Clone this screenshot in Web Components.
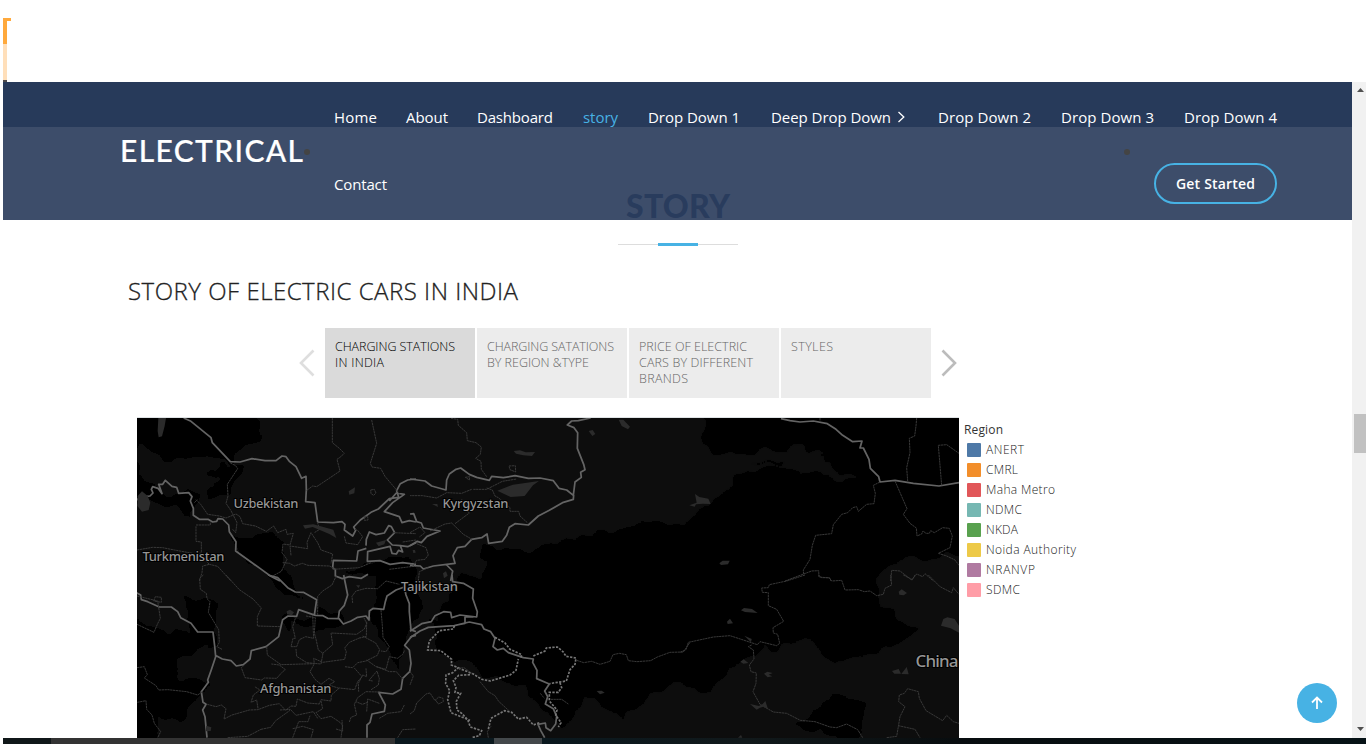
<!DOCTYPE html>
<html lang="en">
<head>
<meta charset="utf-8">
<title>Electrical</title>
<style>
html,body{margin:0;height:744px;overflow:hidden;background:#fff;font-family:"Open Sans","Noto Sans",sans-serif}
</style>
</head>
<body>
<electrical-app></electrical-app>
<script>
const define = (name, html, init) => customElements.define(name, class extends HTMLElement {
  constructor() {
    super();
    const t = document.createElement('template');
    t.innerHTML = html;
    this.attachShadow({mode: 'open'}).append(t.content.cloneNode(true));
  }
  connectedCallback() { if (init) init.call(this); }
});

/* A single line whose tracking is adjusted to fill the width in its w attribute. */
define('fit-text', `<style>:host{display:block;white-space:nowrap}span{display:inline-block}</style><span><slot></slot></span>`, function () {
  const w = +this.getAttribute('w'), s = this.shadowRoot.querySelector('span');
  s.style.letterSpacing = '0';
  const n = this.textContent.length;
  const c = document.createElement('canvas').getContext('2d'), g = getComputedStyle(this);
  c.font = g.fontWeight + ' ' + g.fontSize + ' ' + g.fontFamily;
  s.style.letterSpacing = ((w - c.measureText(this.textContent).width) / (n - 1)).toFixed(3) + 'px';
  this.style.width = w + 'px';
});

define('loader-strip', `<style>
:host{display:block;height:82px;box-sizing:border-box;padding:18px 0 0 3px}
.a{width:8px;height:3px;background:#ffa93c}.b{width:4px;height:23px;background:#ffa93c}
.c{width:4px;height:36px;background:#ffdfba}.d{width:4px;height:2px;background:#4d4a4c}
</style><div class="a"></div><div class="b"></div><div class="c"></div><div class="d"></div>`);

define('site-header', `<style>
:host{display:flex;align-items:center;height:138px;box-sizing:border-box;padding-left:117px;background:rgba(40,58,90,.9);color:#fff;font-size:15px}
.logo{font:500 30px Lato,sans-serif;line-height:40px;width:214px;padding-bottom:3px;-webkit-text-stroke:.2px #fff}
nav{width:943px;height:136px}
.row{display:flex;justify-content:space-between;align-items:center;height:67px}
.row.top{display:grid;grid-template-columns:72px 71px 106px 65px 123px 167px 123px 123px 93px}
.on{color:#47b2e4}
.deep{display:flex;align-items:center;gap:6px}
button{font:600 14px "Open Sans",sans-serif;color:#fff;background:none;border:2px solid #47b2e4;border-radius:21px;width:123px;height:41px;padding:0 0 0 20px;text-align:left}
i{position:absolute;width:6px;height:6px;border-radius:50%;background:#444;top:67px}
i.l{left:301px}i.r{left:1121px}
</style>
<div class="logo"><fit-text w="183">ELECTRICAL</fit-text></div>
<nav><div class="row top"><fit-text w="43">Home</fit-text><fit-text w="42">About</fit-text><fit-text w="76">Dashboard</fit-text><fit-text class="on" w="35">story</fit-text><fit-text w="92">Drop Down 1</fit-text><div class="deep"><fit-text w="120">Deep Drop Down</fit-text><svg width="9" height="12" viewBox="0 0 9 12"><path d="M1.500 1 6.800 6 1.500 11" fill="none" stroke="#fff" stroke-width="1.300"/></svg></div><fit-text w="93">Drop Down 2</fit-text><fit-text w="93">Drop Down 3</fit-text><fit-text w="93">Drop Down 4</fit-text></div>
<div class="row"><fit-text w="53">Contact</fit-text><button><fit-text w="79">Get Started</fit-text></button></div></nav>
<i class="l"></i><i class="r"></i>`);

define('section-title', `<style>
:host{display:flex;flex-direction:column;align-items:center;padding-top:59px;width:1350px;height:60px;color:#37517e}
fit-text{font:900 32px Lato,sans-serif;line-height:40px}
.rule{display:flex;align-items:center;margin-top:17px}
.rule b{width:40px;height:1px;background:#ddd}.rule b+b{height:3px;background:#47b2e4}.rule b+b+b{height:1px;background:#ddd}
</style><fit-text w="104">STORY</fit-text><div class="rule"><b></b><b></b><b></b></div>`);

define('story-tab', `<style>
:host{display:block;width:150px;height:70px;box-sizing:border-box;padding:11px 0 0 10px;background:#ececec;color:#666;font-size:12.5px;line-height:16px;font-weight:300}
:host([active]){background:#dadada;color:#000}
</style><slot></slot>`);

define('story-tabs', `<style>
:host{display:flex;align-items:center;gap:10px;padding-left:296px}
.t{display:flex;gap:2px}svg{display:block}
</style>
<svg width="16" height="30" viewBox="0 0 16 30"><path d="M14.500 2.500 2 15 14.500 27.500" fill="none" stroke="#dedede" stroke-width="2.600"/></svg>
<div class="t">
<story-tab active><fit-text w="120">CHARGING STATIONS</fit-text><fit-text w="49">IN INDIA</fit-text></story-tab>
<story-tab><fit-text w="127">CHARGING SATATIONS</fit-text><fit-text w="102">BY REGION &amp;TYPE</fit-text></story-tab>
<story-tab><fit-text w="108">PRICE OF ELECTRIC</fit-text><fit-text w="114">CARS BY DIFFERENT</fit-text><fit-text w="49">BRANDS</fit-text></story-tab>
<story-tab><fit-text w="42">STYLES</fit-text></story-tab></div>
<svg width="16" height="30" viewBox="0 0 16 30"><path d="M1.500 2.500 14 15 1.500 27.500" fill="none" stroke="#bcbcbc" stroke-width="2.600"/></svg>`);

define('region-map', `<style>
:host{display:block;width:822px;height:320px;border-top:1px solid #dfe3e5;background:#000;overflow:hidden}
svg{display:block}
.n{fill:none;stroke:#646464;stroke-width:5.2;stroke-linejoin:round}
.p{fill:none;stroke:#383838;stroke-width:3;stroke-dasharray:7 1.5}
.d{fill:none;stroke:#777;stroke-width:5;stroke-dasharray:7 4}
.w{fill:#2b2b2b}.g{fill:#0c0c0c}.h{fill:#131313}.k{fill:#030303}
text{font:500 13px "Noto Sans","Open Sans",sans-serif;fill:#969696;stroke:#000;stroke-width:2px;paint-order:stroke}
</style>
<svg width="822" height="320" viewBox="0 0 822 320">
<defs><filter id="soft" x="0" y="0" width="1" height="1"><feTurbulence type="fractalNoise" baseFrequency=".045" numOctaves="2" seed="4"/><feDisplacementMap in="SourceGraphic" scale="22" xChannelSelector="R" yChannelSelector="G" result="a"/><feGaussianBlur in="a" stdDeviation=".8"/></filter></defs>
<g filter="url(#soft)">
<path fill="none" d="M0 0H822V320H0Z"/>
<path class="g" d="M-20 -20H438L447 55 475 70 570 42 643 50 655 36 700 46 725 64 685 54 652 52 610 55 584 72 548 105 470 111 405 130 350 155 320 162 300 200 300 340H-20Z"/>
<path class="g" d="M438 -20H558L570 32H642L660 25 690 42 650 44 580 49 578 70 550 98 440 105Z"/>
<path class="g" d="M404 340 450 280 484 300 531 268 575 270 600 245 625 230 670 220 700 242 745 235 780 208 742 192 745 152 770 140H842V340Z"/>
<path fill="#0a0a0a" d="M285 222 325 235 350 258 385 270 420 300 440 340H280Z"/>
<path class="k" d="M-20 -20H110L122 20 90 42 28 40 28 60 55 67 60 100 35 84 -20 85ZM65 58 92 42 102 46 100 74 70 84ZM98 115 135 115 165 180 145 174 105 135ZM48 175 78 184 80 232 58 238 52 190ZM-20 195 50 213 73 237 66 272 45 303 24 300 12 340H-20ZM140 200 205 194 205 213 157 216ZM205 150 270 140 285 188 260 248 240 215 235 160ZM290 205 330 214 360 240 340 245 300 235Z"/>
<path class="h" d="M130 18 150 0H300L285 25 230 38 180 25ZM115 65 142 65 141 93 113 93ZM60 110 82 118 90 140 65 135ZM170 57 200 62 220 80 175 83ZM83 207 110 180 145 196 136 225 105 235 83 218ZM152 202 175 208 180 225 155 231ZM40 240 70 225 75 260 45 265ZM84 250 110 245 108 267 84 275ZM320 255 350 261 355 290 330 286 320 272Z" opacity=".65"/>
<path fill="#090909" d="M0 28 35 45 62 45 80 63 52 78 28 76 0 60ZM158 5 200 15 182 36 155 29ZM212 45 245 55 235 75 209 71ZM370 35 410 27 430 55 415 67 380 60Z"/>
<path fill="#060606" d="M455 115 520 103 548 112 530 118 475 125ZM340 130 410 130 425 142 395 160 365 178 352 160ZM365 190 400 200 450 210 478 222 440 228 390 210ZM655 310 700 275 730 283 720 320Z"/>
</g>
<g transform="translate(-1,-2) scale(.33333)">
<path class="n" d="M143 6 165 16 225 65 229 80 283 137 312 138 348 128 387 134 420 134 438 120 450 122 461 137 480 152 497 187 510 181 511 222 509 257 537 260 545 318 592 320 618 317 627 325 625 342 650 360 659 343 653 333 673 312 705 289 727 279 760 248 788 244 782 224 793 203 815 192 840 189M3 252 14 242 42 240 51 231 46 220 50 212 66 217 78 233 68 205 80 205 88 193 108 211 122 214 128 232 158 230 168 242 163 255 172 277 172 298 190 310 216 310 230 318 242 316 246 308 260 309 278 327 280 347 300 377 299 405 373 458 403 480 432 495M840 318 820 314 798 320 790 302 745 287 770 260 805 235 781 231 760 255M690 389 691 370 700 348 720 356 745 351 758 329 766 332 776 350 754 372 769 387 793 389 800 408 788 403 781 414 768 412 762 391 695 407 694 436 732 434 762 445 800 440 840 445M691 397 666 405 662 435 592 433 590 455 598 461 598 480 619 488 640 482 676 487 696 475M793 389 815 392 840 380"/>
<path class="p" d="M589 6V80L610 97 625 112 612 124 603 130 612 165 578 188 542 212 530 210 511 224M707 12 722 82 703 142 708 153 734 157 747 181 780 220 790 233M283 141 299 149 305 158 274 205 276 240 270 262 285 284 303 320 299 350 290 340M180 251 194 265 215 295 250 300 270 306 300 294 312 302 320 323 358 330 391 346 413 330 425 350 450 340 453 355 472 352 462 387 441 384 438 410 453 430 436 466 410 480M175 260 184 251M180 327H223V317M180 331V376L196 378V410L190 414 220 445 200 450 198 470 190 495M3 402 50 394 80 395 115 402 170 412M220 445 245 451 285 495M440 440 461 442 475 450 499 442 516 448 580 450 600 460M465 418 462 390 515 398 513 379 525 350 545 380 555 402 590 414 585 442M544 318 551 340 535 350M625 361 630 381 665 386 680 362 665 343 657 340M590 460 670 455 705 440M770 350 840 353M800 378 840 372M760 460 840 450"/>
<path class="w" d="M67 6 90 6 86 30 78 61 68 64 65 45ZM5 240 18 226 35 240 43 260 38 282 18 287 4 270ZM501 328 532 325 592 341 601 366 580 354 530 333 507 338ZM638 226 657 214 655 232 640 236ZM720 380 750 372 745 385 728 391Z"/>
<path class="p" d="M704 222 715 220 720 231 713 238 705 233ZM685 300 695 302 696 312 685 313Z"/>
</g>
<g transform="translate(-1,157) scale(.33333)">
<path class="n" d="M0 52 14 60 16 74 35 80 70 96 106 96 125 110 134 128 165 145 185 171H231L236 213 239 245 226 284 215 315 217 322 196 350 201 382 210 388 200 405 207 425 213 488M238 241 259 252 285 257 301 273 322 269 342 252 346 227 390 215 428 185 436 150 440 134 456 123 482 124 488 104 538 121 561 122 575 130 609 131 622 147 645 138 665 127 690 123 699 135 700 108 712 100 743 103 748 80 753 63 780 45 805 36 810 60 820 86 820 110 825 165 840 170M396 0 425 8 455 38 478 51 502 52 542 74 535 121M623 0 629 30 635 60 625 91 610 108 607 130M840 181 827 184 806 211 820 225 825 265 821 290 800 310 795 343 770 357 728 352 748 390 745 409 708 417 702 442 693 450V488"/>
<path class="p" d="M3 63 65 78 73 130 64 148 54 172 3 148M202 0 191 10 193 43 211 55 213 71 222 80 217 112 248 164 250 202 243 215 258 223M270 0 310 44 351 72 376 99 364 125V153L434 155M478 130 470 155 478 190 471 190 465 215 482 215 490 194 509 185 533 190 530 120M510 123 538 128 535 175 540 192 547 225 561 235 555 267 512 263 482 244 480 222M560 235 590 209 585 174 662 178 685 162 692 145 684 129M392 215 394 240 435 269 535 266 533 250 560 262 626 253 631 230 626 219 640 202 675 187M680 183 719 204 731 224 724 241 690 258 665 263 650 278 626 275M692 140 691 184 672 189M735 105 739 151 741 187 760 215 750 230 735 228M326 269 316 278 327 308 377 315 385 309 422 310 438 292 448 284 430 270 406 267M3 278 25 275 34 299 25 309 60 332 68 345 96 344 152 350 185 360 199 350M4 382 30 377 32 403 48 420 55 445 74 470 65 488M214 388 240 395 256 390 270 401 264 432 288 420 340 405 366 404 400 391 430 386 449 406 465 393 480 394 484 372 515 384 550 387 555 374 585 378 586 360 610 339 656 344 665 320 678 305 655 279M534 268 522 290 537 313 555 328 579 310 596 320 579 330 609 340M555 378 560 401 540 413 555 431 585 424 609 440 620 450 615 488M432 405 463 403 480 421 532 410 545 430M366 400 362 375 345 382 352 360 372 345 356 335M375 463 404 457 419 437 462 406M470 488 488 440 516 440 522 422M640 441 645 427 662 420 655 388 665 368 690 350 730 351M690 280 692 305 680 300 667 325 668 350M692 255 720 275 750 283 760 245 785 250 800 238 806 226M710 318 699 316 723 288 730 311 727 330 704 345M722 275 760 290 781 290 800 312M600 462 620 468 618 435M695 382 679 388 660 380M730 385 695 372 692 410M730 430 755 415 795 410 805 390M785 488 800 464 840 462M545 120V64L560 48 588 30 602 0M650 84 648 64 660 48 690 40 725 41 750 18 790 28M53 78 58 65 76 67 76 82ZM470 461 500 454 532 464 525 488M275 488 335 484 375 463"/>
<path class="w" d="M452 109 462 104 474 112 468 121 453 118ZM211 452 226 457 224 468 209 469ZM660 31 672 31 668 39Z"/>
</g>
<g transform="translate(273,-2) scale(.33333)">
<path class="n" d="M542 6 505 14 485 15 472 27 492 35 503 50 502 97 521 145 525 161 512 169 514 184 495 198 490 238 470 222 447 217 430 194 390 186 355 187 315 179 280 185 245 181 238 193 200 184 178 175 152 156 138 160 118 174 110 192 108 222 65 210 45 195 0 189M491 237 490 250 460 259 418 283 385 300 355 327 315 323 298 334 290 358 277 376 236 382 231 354 215 365 185 370 165 391 142 395 129 419 135 442 110 445 70 450 40 459 31 450 0 448M110 447 128 465 122 495M0 294 11 293 20 317 34 321 40 336 90 345 51 361 34 380 22 376 0 389"/>
<path class="p" d="M123 7 143 10 145 28 170 50 172 74 198 80 214 93 211 115 197 127 213 136 214 160 230 182M185 220 155 232 110 230 80 246 38 239 0 239M190 220H230L277 196 320 189M230 216 247 222 255 240 265 245 300 275 300 286H326L330 300 352 320M60 345 105 324 125 321 160 355 186 370M135 323 178 291 165 280 168 265 155 250M0 350 30 333 45 350 28 363M20 383 48 395 55 417 45 430 20 433 8 451M25 495 28 467 55 455M297 150 316 149 317 168 300 161ZM166 184 179 182 178 192Z"/>
<path class="w" d="M311 105 330 103 347 109 375 108 366 120 340 118 318 113ZM626 11 640 11 660 32 654 40 635 30ZM536 45 548 42 556 54 547 60ZM262 224 309 206 387 195 369 208 344 240 302 243ZM66 264 82 264 84 273ZM99 472 108 466 113 479 102 487ZM8 402 15 402 17 410 10 411Z"/>
</g>
<g transform="translate(273,157) scale(.33333)">
<path class="n" d="M126 0 128 20 160 25 190 42 188 70 202 110 200 126 150 120 125 128 122 112 101 110 75 122 64 140 35 146 0 169M0 188 30 168 55 157 133 152 178 141 215 149 222 162 242 170 255 190 249 215 262 225 280 220 295 233 340 248 370 252 368 262 381 286 380 311 418 327 404 348 413 365 406 387 430 401 440 424 437 447 422 467 408 458 406 444 384 448 392 466 404 488M145 149 165 145 165 126 190 126"/>
<path class="d" d="M133 152 130 162 88 167 58 198 53 225 92 227 125 253 124 270 145 278 128 293 108 300 107 326 119 347 113 374 123 413 180 436M145 279 190 297 215 313 241 318 300 300 318 286 325 252M255 187 285 204 300 223 335 239 332 250M370 243 405 228 409 219 442 216 460 231 468 244 498 249 495 268 480 284 469 318 430 324 419 326M450 323 455 338 445 352 418 352 418 378 441 405 437 420 453 443 445 456M180 299 146 301 130 317 138 337 135 352 152 355 139 379 141 405 155 415 173 434 181 456 215 467 208 482 185 488M235 462 243 430 284 407 305 412 325 432 350 427 370 450 388 443"/>
<path class="p" d="M500 256 521 263 545 259 570 268 600 259 609 239 628 235 649 239 655 257 681 260 722 257 742 246 780 232 820 231 840 202M210 320 235 350 255 362 266 379 300 410M145 280 162 278 187 296M0 417 13 407 20 384 48 357 60 354 75 377 86 366 99 370 100 380 85 387 75 373M0 290 10 303 0 330M422 373 455 373 475 387M391 355 403 370M235 488 232 470 243 454"/>
<path class="w" d="M560 348 575 347 584 353 570 358Z"/>
</g>
<g transform="translate(543,-2) scale(.33333)">
<path class="n" d="M303 8 330 14 360 18 400 15 442 23 468 40 488 58 518 77 546 75 540 96 550 96 567 130 571 157 596 182 600 198 645 193 700 202 777 210 837 200"/>
<path class="p" d="M420 6V18M710 6 708 30 704 60 688 67 690 110 680 155 683 195M785 208 775 88 800 86 837 112M600 198 580 208 586 232 582 263 560 265 535 286 530 272 518 275 503 290 485 295 460 326 455 353 407 358 397 388 390 430 370 462 371 474 315 495M645 195 681 278 670 295 690 322 709 336 711 360 725 354 729 345 738 352 748 352 752 344 763 350 788 335 808 337 817 360 810 395 775 412 800 420 825 432 837 448M371 474 395 465 416 464 417 483 450 486 453 495M632 495 635 463 660 465 695 492 710 474 728 482 735 473 760 495"/>
<path class="w" d="M45 234 58 243 85 248 92 264 68 263 48 265 44 272 28 268 50 260ZM118 442 128 434 149 434 144 445 123 447Z"/>
</g>
<g transform="translate(543,157) scale(.33333)">
<path class="p" d="M375 0 320 18 268 29 265 38 245 39 247 52 265 53V92L290 103 311 139 279 158 280 174 293 178 299 205 290 212 240 200 232 209 190 195 150 182 100 186 25 202 18 224 0 232M415 0 425 8 447 8 455 18 485 16 495 45 535 44 553 50 570 48 590 62 610 58 615 40 635 30 632 0M670 0 697 14 705 0M745 0 780 35 815 53 820 38 837 58M215 210 205 215 220 225 222 252 208 270 213 290 229 294 228 325 219 350 240 388 280 411 320 415 361 436 405 440 450 456 470 458 500 447 533 464 548 488M620 488 650 484 655 455 660 425 675 395 656 380 658 360 673 355 683 341 715 350 718 370 738 407 788 437 800 421 820 440 837 445M655 452 705 463 720 488"/>
<path class="w" d="M183 106 192 99 216 102 233 114 195 111ZM141 140 150 131 159 145 143 147ZM193 182 215 192 213 202ZM656 50 665 43 681 54 671 61 658 59ZM783 152 790 132 802 127 824 132 837 152 837 173 812 160ZM636 288 656 282 663 296 643 296ZM664 297 680 276 686 298ZM181 260 191 253 205 264 190 266ZM252 296 262 290 278 294 266 299 277 304 263 307ZM210 387 237 393 248 387 256 378 264 402 250 395 240 398 230 404ZM174 488 183 480 187 488Z"/>
</g>
<g><text x="96.500" y="89.500" textLength="65">Uzbekistan</text><text x="305.500" y="90" textLength="66">Kyrgyzstan</text><text x="5.500" y="143" textLength="82">Turkmenistan</text><text x="264" y="173" textLength="57">Tajikistan</text><text x="123" y="275" textLength="71.500">Afghanistan</text><text x="778.500" y="249" textLength="43" style="font-size:17px">China</text></g>
</svg>`);

define('legend-item', `<style>
:host{display:flex;align-items:center;height:20px;gap:5px;padding-left:3px}
b{width:14px;height:14px;border-radius:1px;background:var(--c)}
</style><b></b><slot></slot>`);
define('region-legend', `<style>
:host{display:block;padding:3px 0 0 5px;font-size:12px;font-weight:300;color:#222;line-height:18px}
.t{font-weight:400;color:#333;height:20px;line-height:20px}
</style><fit-text class="t" w="39">Region</fit-text>
<legend-item style="--c:#4e79a7"><fit-text w="38">ANERT</fit-text></legend-item>
<legend-item style="--c:#f28e2b"><fit-text w="32">CMRL</fit-text></legend-item>
<legend-item style="--c:#e15759"><fit-text w="69">Maha Metro</fit-text></legend-item>
<legend-item style="--c:#76b7b2"><fit-text w="36">NDMC</fit-text></legend-item>
<legend-item style="--c:#59a14f"><fit-text w="32">NKDA</fit-text></legend-item>
<legend-item style="--c:#edc948"><fit-text w="90">Noida Authority</fit-text></legend-item>
<legend-item style="--c:#b07aa1"><fit-text w="49">NRANVP</fit-text></legend-item>
<legend-item style="--c:#ff9da7"><fit-text w="34">SDMC</fit-text></legend-item>`);

define('story-board', `<style>
:host{display:block}
.h{font-size:24px;font-weight:300;color:#222;line-height:34px;padding:28px 0 0 125px;margin-bottom:20px;-webkit-text-stroke:.3px #222}
.m{display:flex;margin-top:19px;padding-left:134px}
</style><div class="h"><fit-text w="390">STORY OF ELECTRIC CARS IN INDIA</fit-text></div><story-tabs></story-tabs>
<div class="m"><region-map></region-map><region-legend></region-legend></div>`);

define('scroll-bar', `<style>
:host{display:flex;flex-direction:column;align-items:flex-end;width:14px;height:656px;background:#f1f1f1}
svg{width:12px;height:17px}b{width:12px;height:39px;background:#c1c1c1;margin:315px 0 267px}
</style><svg viewBox="0 0 12 17"><path d="M3 10 6.500 6 10 10Z" fill="#505050"/></svg><b></b><svg viewBox="0 0 12 17"><path d="M3 7H10L6.500 11Z" fill="#505050"/></svg>`);

define('task-strip', `<style>
:host{display:flex;height:6px;padding-left:3px}b{height:6px}
</style><b style="width:48px;background:#101719"></b><b style="width:344px;background:#333"></b><b style="width:99px;background:#0a181e"></b><b style="width:48px;background:#43484b"></b><b style="flex:1;background:linear-gradient(90deg,#0a181e,#11191b 25%,#080d0f 50%,#061216)"></b>`);

define('electrical-app', `<style>
:host{display:block;width:1366px;height:744px;overflow:hidden}
.v{display:flex;height:656px;padding-left:3px}
main{position:relative;width:1349px;height:656px;overflow:hidden}
.hero{height:45px;background:#253c5a}
site-header{position:absolute;left:0;top:0;width:1349px}
.up{position:absolute;left:1294px;top:601px}
</style>
<loader-strip></loader-strip>
<div class="v"><main><div class="hero"></div><section-title></section-title><story-board></story-board><site-header></site-header>
<svg class="up" width="40" height="40" viewBox="0 0 40 40"><circle cx="20" cy="20" r="20" fill="#47b2e4"/><path d="M20 26V15M15 19.500 20 14.500 25 19.500" fill="none" stroke="#fff" stroke-width="1.800"/></svg>
</main><scroll-bar></scroll-bar></div><task-strip></task-strip>`);
</script>
</body>
</html>
